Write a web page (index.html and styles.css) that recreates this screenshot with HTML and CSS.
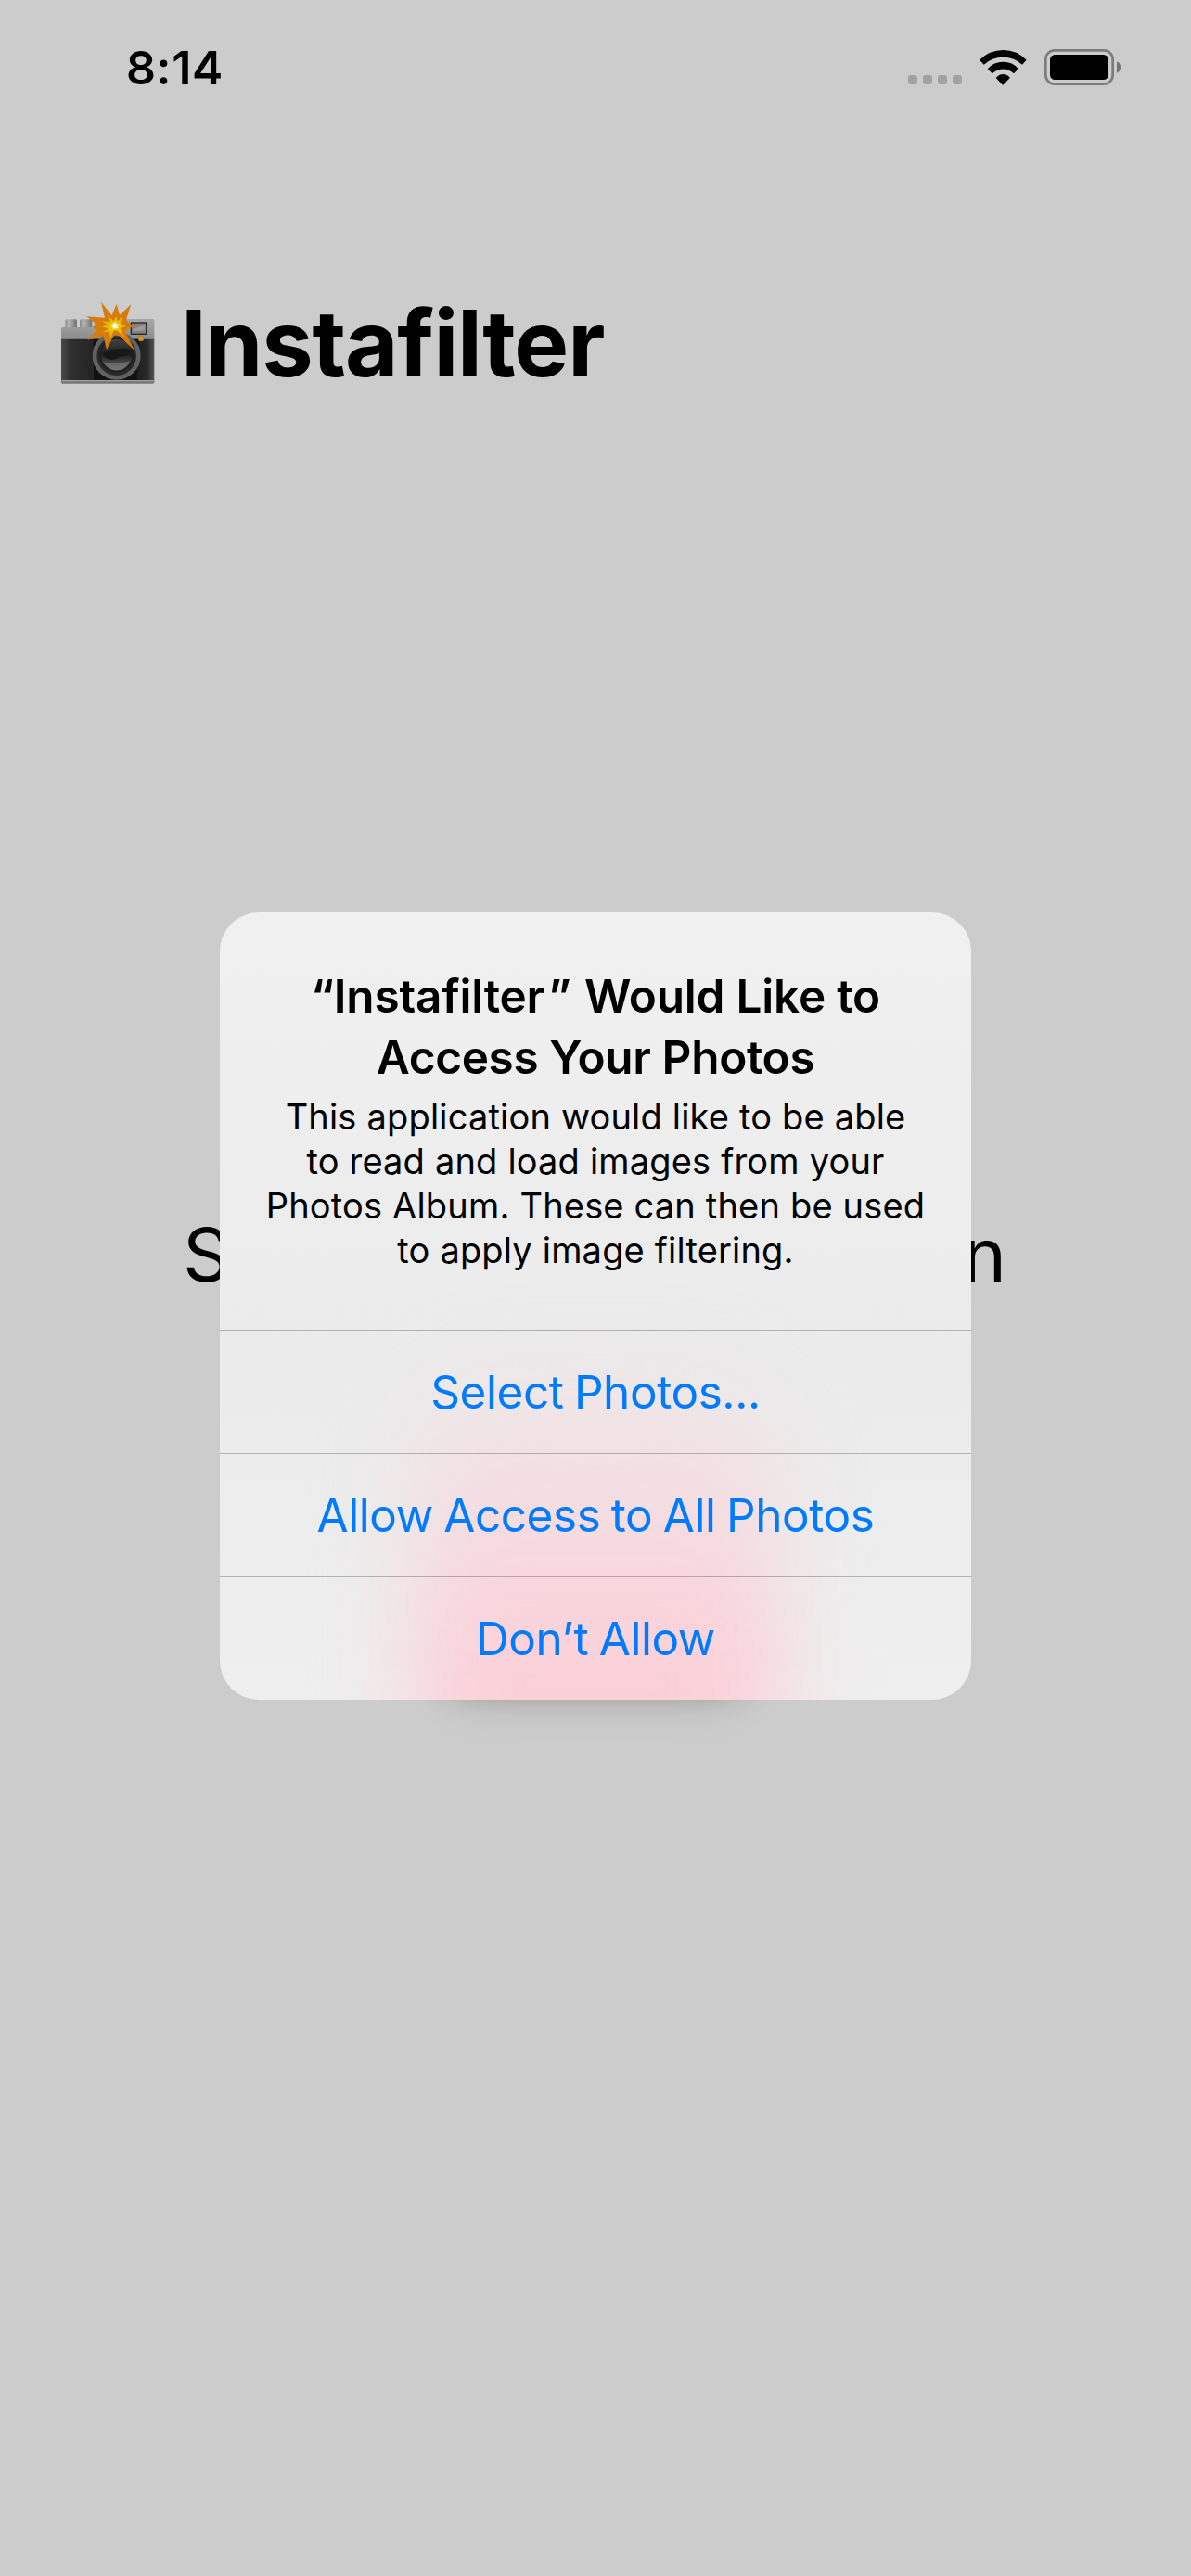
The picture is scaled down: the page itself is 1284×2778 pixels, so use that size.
FILE: index.html
```html
<!DOCTYPE html>
<html lang="en">
<head>
<meta charset="utf-8">
<title>Instafilter</title>
<link rel="stylesheet" href="styles.css">
</head>
<body>
<div class="screen">
  <header class="status">
    <span class="clock">8:14</span>
    <div class="indicators">
      <svg class="cell" viewBox="0 0 58 10"><g fill="#a2a2a2"><rect width="10" height="10" rx="3"/><rect x="16" width="10" height="10" rx="3"/><rect x="32" width="10" height="10" rx="3"/><rect x="48" width="10" height="10" rx="3"/></g></svg>
      <svg class="wifi" viewBox="289 71 152 113"><path d="M289 103Q321 71 365 71T440 103L426 118Q401 94 365 94T303 118ZM315 131Q335 109 365 109T414 131L399 146Q384 132 365 132T330 146ZM342 160Q351 148 365 148T387 160L366 182Q364 184 362 182Z"/></svg>
      <svg class="battery" viewBox="498 69 246 117"><rect x="502" y="73" width="217" height="109" rx="29" fill="none" stroke="#7c7c7c" stroke-width="8"/><rect x="516" y="87" width="189" height="81" rx="16"/><path d="M732 109Q744 114 744 127.500T732 146Z" fill="#747474"/></svg>
    </div>
  </header>
  <main class="page">
    <h1 class="heading">
      <svg class="camera" viewBox="0 0 390 360">
        <defs>
          <linearGradient id="metal" x1="0" y1="0" x2="0" y2="1"><stop offset="0" stop-color="#a8a8a8"/><stop offset=".4" stop-color="#9c9c9c"/><stop offset="1" stop-color="#8b8b8b"/></linearGradient>
          <linearGradient id="knob"><stop offset="0" stop-color="#8c8c8c"/><stop offset=".3" stop-color="#b5b5b5"/><stop offset=".6" stop-color="#9a9a9a"/><stop offset="1" stop-color="#707070"/></linearGradient>
          <linearGradient id="leather"><stop offset="0" stop-color="#4a4a4a"/><stop offset=".1" stop-color="#303030"/><stop offset=".38" stop-color="#222"/><stop offset=".7" stop-color="#111"/><stop offset=".93" stop-color="#2b2b2b"/><stop offset="1" stop-color="#565656"/></linearGradient>
          <linearGradient id="glass" x1="0" y1="0" x2="0" y2="1"><stop offset="0" stop-color="#444"/><stop offset=".5" stop-color="#1d1d1d"/><stop offset="1" stop-color="#777"/></linearGradient>
          <radialGradient id="flash" gradientUnits="userSpaceOnUse" cx="222" cy="125" r="58"><stop offset="0" stop-color="#f5edbc"/><stop offset=".3" stop-color="#e9c700"/><stop offset="1" stop-color="#dfa51b"/></radialGradient>
        </defs>
        <rect x="61" y="103" width="38" height="30" rx="5" fill="url(#knob)"/>
        <rect x="108" y="103" width="40" height="30" rx="5" fill="url(#knob)"/>
        <path d="M48 134Q48 129 53 129H154V106Q154 102 159 102H344Q349 102 349 107V170H48Z" fill="url(#metal)"/>
        <path d="M48 167H349V303H48Z" fill="url(#leather)"/>
        <path d="M152 167H300L292 303H154Z" fill="#111"/>
        <rect x="48" y="300" width="301" height="11" rx="4" fill="#777"/><path d="M50 302H347" stroke="#aaa" stroke-width="3"/>
        <rect x="274" y="114" width="49" height="37" fill="#858080" stroke="#292929" stroke-width="4"/><path d="M279 136Q297 126 319 123V138Q300 143 279 140Z" fill="#a09997"/>
        <circle cx="306" cy="165" r="9" fill="#d49525" stroke="#a57524" stroke-width="2"/>
        <circle cx="227" cy="221" r="71" fill="#292929" stroke="#5f6162" stroke-width="14"/>
        <circle cx="227" cy="218" r="53" fill="url(#glass)" stroke="#1d1d1d" stroke-width="5"/>
        <path d="M181 218Q199 197 236 199Q270 193 275 208Q260 226 240 223Q213 242 194 228Z" fill="#171717"/>
        <path d="M183 241Q231 252 270 238Q258 266 227 267Q194 263 183 241Z" fill="#777" opacity=".65"/>
        <path d="M177 47L212 91L227 53L237 89L274 55L258 105L280 126L254 142L285 204L235 156L219 154L195 201L184 157L133 170L164 138L149 129L163 119L130 94L189 98Z" fill="#d77c0b"/>
        <path transform="translate(60 34) scale(.73)" d="M190 76L216 103L227 80L233 104L258 75L245 113L272 126L244 134L264 174L231 145L216 143L201 180L198 149L165 154L192 136L164 127L190 120L162 101L202 107Z" fill="url(#flash)"/>
        <path transform="translate(66 37) scale(.7)" d="M222 104L228 117L241 114L232 126L239 137L225 133L215 141L215 129L204 126L216 119L211 110L221 116Z" fill="#fff"/>
      </svg>
      <span class="name">Instafilter</span>
    </h1>
    <p class="prompt"><span>S</span><span>n</span></p>
    <div class="button-shadow"></div>
  </main>
  <div class="overlay">
    <section class="alert" role="alertdialog">
      <div class="copy">
        <h2><span class="t1">“Instafilter<span class="quote">”</span> Would Like to</span><br>Access Your Photos</h2>
        <p>This application would like to be able<br>to read and load images from your<br>Photos Album. These can then be used<br>to apply image filtering.</p>
      </div>
      <button>Select Photos...</button>
      <button>Allow Access to All Photos</button>
      <button>Don’t Allow</button>
    </section>
  </div>
</div>
</body>
</html>
```
FILE: styles.css
```css
* { box-sizing: border-box; margin: 0; padding: 0; }
body { font-family: Inter, "Liberation Sans", sans-serif; color: #000; background: #ccc; }
.screen { position: relative; width: 1284px; height: 2778px; overflow: hidden; background: #ccc; }
.status { display: flex; justify-content: space-between; height: 141px; padding: 53px 76px 0 136px; }
.clock { height: 40px; font-size: 50px; line-height: 40px; font-weight: 600; letter-spacing: .6px; }
.indicators { display: flex; }
.indicators svg { display: block; }
.cell { width: 58px; height: 10px; margin: 28px 19px 0 0; }
.wifi { width: 51px; height: 38px; margin: 1px 19px 0 0; }
.battery { width: 82px; height: 39px; }
.page { display: flex; flex-direction: column; }
.heading { display: flex; height: 120px; margin: 169px 0 0 50px; }
.camera { width: 130px; height: 120px; }
.name { margin-left: 15px; font-size: 99px; line-height: 120px; font-weight: 700; letter-spacing: -1.15px; }
.prompt { display: flex; justify-content: space-between; margin: 873px 199px 0 197px; font-size: 80px; line-height: 100px; }
.button-shadow { width: 326px; height: 340px; margin: 68px 0 0 479px; border-radius: 30px; box-shadow: 0 9px 36px rgba(0,0,0,.36), 0 16px 60px rgba(0,0,0,.1); }
.overlay { position: absolute; inset: 0; display: flex; justify-content: center; align-items: flex-start; padding-top: 984px; }
.alert {
  position: relative; isolation: isolate;
  width: 810px; height: 849px; overflow: hidden; border-radius: 42px;
  display: grid; grid-template-rows: 449.5px 133px 133px 133.5px;
  background: linear-gradient(#f0f0f0, #ebebeb 58%, #efefef);
}
/* Colour of the button behind, diffused through the frosted panel */
.alert::before {
  content: ""; position: absolute; z-index: -1; left: 210px; bottom: -130px; width: 390px; height: 470px;
  border-radius: 100px; filter: blur(48px);
  background: linear-gradient(rgba(245,219,224,.4), #f7d7dd 45%, #fbcfd8 62%);
}
.copy { padding-top: 57px; text-align: center; white-space: nowrap; }
.copy h2 { font-size: 49.5px; line-height: 66px; font-weight: 600; letter-spacing: -.35px; }
.t1 { letter-spacing: -.2px; }
.quote { margin: 0 2px 0 4px; }
.copy p { margin-top: 7px; font-size: 38px; line-height: 48px; font-weight: 400; letter-spacing: .18px; }
.alert button { border: 0; border-top: 1px solid rgba(0,0,0,.25); background: none; color: #007aff; font: 400 49.5px/132px Inter, "Liberation Sans", sans-serif; letter-spacing: -.45px; word-spacing: -2px; }
```
